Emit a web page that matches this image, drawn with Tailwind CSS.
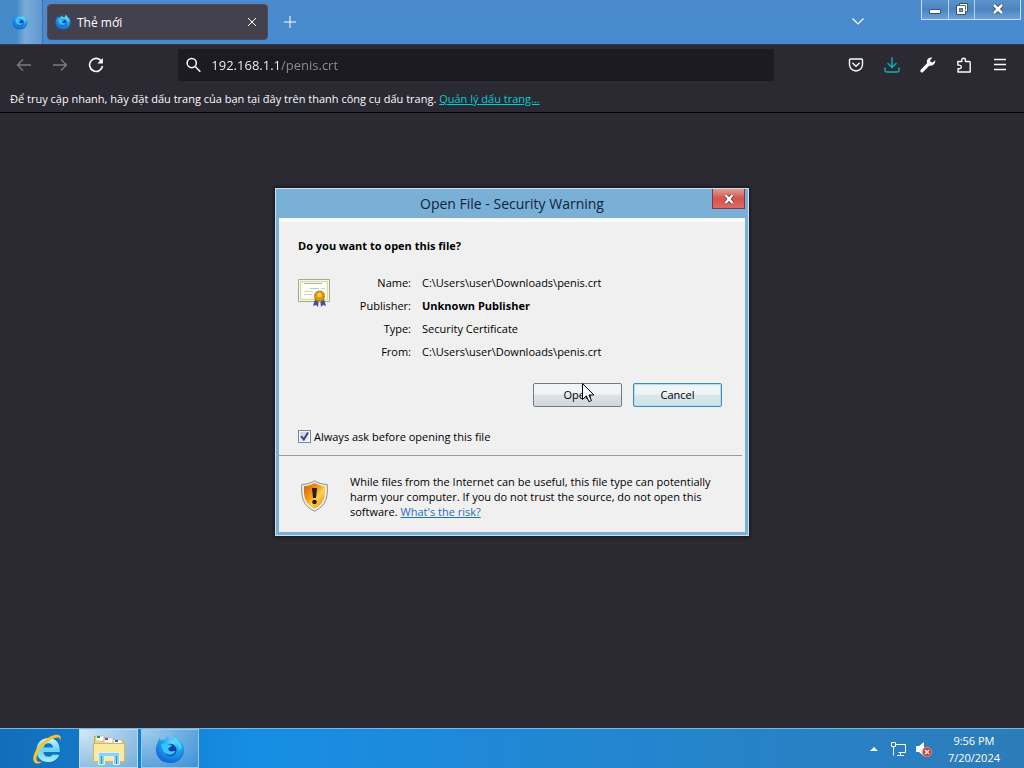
<!DOCTYPE html>
<html lang="vi">
<head>
<meta charset="utf-8">
<meta name="viewport" content="width=device-width, initial-scale=1">
<title>Thẻ mới</title>
<script src="https://cdn.jsdelivr.net/npm/@tailwindcss/browser@4"></script>
</head>
<body class="flex min-h-screen flex-col bg-[#2b2a33] font-['Open_Sans','Noto_Sans',sans-serif] text-[11px] leading-[15px] text-black">

<svg class="absolute size-0" aria-hidden="true">
  <defs>
    <radialGradient id="fxBody" cx="60%" cy="25%" r="80%"><stop offset="0" stop-color="#5fe0ff"/><stop offset=".45" stop-color="#1ea5f5"/><stop offset="1" stop-color="#1060cf"/></radialGradient>
    <symbol id="firefox" viewBox="0 0 32 32">
      <path fill="url(#fxBody)" d="M3 9c.4-2 1.400-3.500 2.400-4.500.1 1.200.4 2 .9 2.700 1.200-.9 2.600-1.300 4-1.300C11.800 4 13 3 14.800 2.400c-.4 1.600.2 2.800 1.700 3.800 1 .5 2.100.9 3 1.500-.3-2.700.5-5.200 2.400-7.200.6 2.500 2.300 4 4.300 6 3 2.900 4.800 6 4.800 10.500C31 25.300 24.500 31 16 31S1 25 1 16.500C1 13.700 1.800 11 3 9z"/>
      <circle cx="16.500" cy="17" r="6.500" fill="#123fa6"/>
      <path fill="#39c6fb" d="M7 11c2-1.200 4-1.200 5.700 0 2 .3 4.300.1 5.300.8-.2 1.700-2.200 2.500-3.600 3.200-.5 2 .6 3.500 2.600 3.600 2 .1 3.200-1 4.800-.2-1.300 2.900-4 4.200-6.900 3.700C10 21.300 7 17 7 11z"/>
      <path fill="#52d9ff" opacity=".8" d="M20 8c4 2 6 5 5.700 9.500 1-1.300 1.300-2.500 1.300-4 1.500 4 .6 8.500-2.500 11.500C28.500 21 30 12 26 8.500 24 6.800 22.500 5 22 3c-1 1.500-1.700 3-2 5z"/>
    </symbol>
  </defs>
</svg>

<header class="text-white">
  <div class="flex h-11 items-start bg-linear-to-b from-[#4c8acb] to-[#468bd0]">
    <div class="flex h-11 w-[43px] items-center border-r border-[#3975b5] bg-linear-to-r from-[#468bc8] from-40% via-[#7cacd9] via-60% to-[#5f98cf] pl-3">
      <svg class="size-4"><use href="#firefox"/></svg>
    </div>
    <div class="mt-1 ml-1 flex h-9 w-[221px] items-center gap-1.5 rounded-sm border border-[#5b4650] bg-[#42414d] pr-[7px] pl-[7px]">
      <svg class="size-4"><use href="#firefox"/></svg>
      <span class="grow pt-px text-xs">Thẻ mới</span>
      <button aria-label="Đóng thẻ" class="p-1"><svg class="size-2" viewBox="0 0 8 8" fill="none" stroke="#fff"><path d="M0 0l8 8M8 0L0 8"/></svg></button>
    </div>
    <button aria-label="Thẻ mới" class="mt-4 ml-4"><svg class="size-3" viewBox="0 0 12 12" fill="none" stroke="#fff"><path d="M6 0v12M0 6h12"/></svg></button>
    <button aria-label="Liệt kê các thẻ" class="mt-[18px] mr-[57px] ml-auto"><svg class="h-[7px] w-3" viewBox="0 0 12 7" fill="none" stroke="#fff" stroke-width="1.200"><path d="M.5.5L6 6 11.500.5"/></svg></button>
    <div class="mr-[3px] flex h-5 divide-x divide-[#b5d4ee] border border-t-0 border-[#c6def2] bg-linear-to-b from-[#5b93cc] via-[#4b84c0] to-[#6ba2d8]">
      <button aria-label="Thu nhỏ" class="grid w-[27px] place-items-center"><svg class="h-5 w-4" viewBox="0 0 16 20"><path d="M2.500 9.500h11v4h-11z" fill="#fff" stroke="#39516e"/></svg></button>
      <button aria-label="Khôi phục" class="grid w-[26px] place-items-center"><svg class="h-5 w-4" viewBox="0 0 16 20"><path fill="#fff" stroke="#39516e" d="M5.500 3.500h8v8h-2v3h-9v-9h3z"/><path d="M5 8h4v4H5z" fill="#4b6e98"/><path d="M6.500 9.500h1v1h-1z" fill="#fff"/><path d="M6 5.500h5.500v5" fill="none" stroke="#4b6e98"/></svg></button>
      <button aria-label="Đóng" class="grid w-[45px] place-items-center"><svg class="h-5 w-4" viewBox="0 0 16 20" fill="none"><path d="M4 5l8 8M12 5l-8 8" stroke="#39516e" stroke-width="4.500"/><path d="M4 5l8 8M12 5l-8 8" stroke="#fff" stroke-width="2.500"/></svg></button>
    </div>
  </div>

  <div class="flex h-[41px] items-center border-t border-[#3a3943] pr-4 pl-4">
    <div class="flex w-[162px] items-center gap-5">
      <button aria-label="Quay lại"><svg class="size-4" viewBox="0 0 16 16" fill="none" stroke="#7c7b83" stroke-width="1.300"><path d="M15 8H1.500M7 2.500L1.500 8 7 13.500"/></svg></button>
      <button aria-label="Tiến"><svg class="size-4" viewBox="0 0 16 16" fill="none" stroke="#7c7b83" stroke-width="1.300"><path d="M1 8h13.500M9 2.500L14.500 8 9 13.500"/></svg></button>
      <button aria-label="Tải lại"><svg class="size-4" viewBox="0 0 16 16" fill="none" stroke="#fbfbfe" stroke-width="1.600"><path d="M13.500 4.300A6.500 6.500 0 1 0 14.500 9"/><path d="M14.900 1v5.500H9.400z" fill="#fbfbfe" stroke="none"/></svg></button>
    </div>
    <label class="mr-[74px] flex h-8 grow items-center gap-2.5 bg-[#1c1b22] px-2">
      <svg class="size-4" viewBox="0 0 16 16" fill="none" stroke="#fbfbfe" stroke-width="1.600"><circle cx="6" cy="6" r="4.800"/><path d="M9.600 9.600L15 15"/></svg>
      <input aria-label="Địa chỉ" type="text" value="192.168.1.1/penis.crt" class="w-full bg-linear-to-r from-[#fbfbfe] from-[69px] to-[#8f8f9d] to-[69px] bg-clip-text text-[13px] text-transparent outline-none">
    </label>
    <div class="flex items-center gap-5">
      <button aria-label="Pocket"><svg class="size-4" viewBox="0 0 16 16" fill="none" stroke="#fbfbfe" stroke-width="1.400" stroke-linecap="round"><path d="M2.500 2h11a1 1 0 0 1 1 1v4.500a6.500 6.500 0 0 1-13 0V3a1 1 0 0 1 1-1z"/><path d="M4.800 6.300L8 9.300l3.200-3"/></svg></button>
      <button aria-label="Tải xuống"><svg class="size-4" viewBox="0 0 16 16" fill="none" stroke="#0fb1bb" stroke-width="1.400" stroke-linecap="round"><path d="M8 .8v9.400M4 6.500l4 4 4-4M1 11v2.200A1.800 1.800 0 0 0 2.800 15h10.400a1.800 1.800 0 0 0 1.800-1.800V11"/></svg></button>
      <button aria-label="Công cụ"><svg class="size-4" viewBox="0 0 16 16" fill="#fbfbfe"><path d="M15.200 3.300l-2.700 2.300-2-.6-.3-2L12.500.6C10.300-.1 8 .9 7.200 3c-.4 1-.4 2 0 3L.8 12.700a1.600 1.600 0 0 0 2.300 2.300l6.400-6.600c3 1.100 6.200-1.500 5.700-5.100z"/></svg></button>
      <button aria-label="Tiện ích"><svg class="size-4" viewBox="0 0 16 16" fill="none" stroke="#fbfbfe" stroke-width="1.400" stroke-linejoin="round"><path d="M2 15v-3.300h1.500a1.800 1.800 0 0 0 0-3.600H1.800V4.500h4V3a1.800 1.800 0 0 1 3.600 0v1.500h3.800a1 1 0 0 1 1 1V15z"/></svg></button>
      <button aria-label="Menu"><svg class="size-4" viewBox="0 0 16 16" fill="none" stroke="#fbfbfe" stroke-width="1.300"><path d="M2 2.500h12M2 7.500h12M2 12.500h12"/></svg></button>
    </div>
  </div>

  <p class="h-7 border-b border-black px-2.5 pt-1.5 text-[#fbfbfe]">Để truy cập nhanh, hãy đặt dấu trang của bạn tại đây trên thanh công cụ dấu trang. <a href="#" class="text-[#00ced8] underline">Quản lý dấu trang…</a></p>
</header>

<main class="flex grow items-start justify-center pt-[75px]">
  <section role="dialog" aria-labelledby="dlg-title" class="w-[474px] border border-[#c3e3f5] bg-[#7ab0d5] px-[3px] pb-[3px] shadow-[0_0_3px_1px_#16151b]">
    <div class="relative h-[29px]">
      <h1 id="dlg-title" class="text-center text-sm leading-[29px] text-[#10233c]">Open File - Security Warning</h1>
      <button aria-label="Close" class="absolute top-0 right-0 grid h-5 w-[33px] place-items-center border border-t-0 border-[#7c3a46] bg-linear-to-b from-[#e39a94] via-[#d2554f] via-50% to-[#dc6a62]"><svg class="h-3 w-4" viewBox="0 0 16 12" fill="none"><path d="M4.500 2l7 8M11.500 2l-7 8" stroke="#6e3038" stroke-width="4"/><path d="M4.500 2l7 8M11.500 2l-7 8" stroke="#fff" stroke-width="2.500"/></svg></button>
    </div>
    <div class="border-t-4 border-[#fafafa] bg-[#f0f0f0]">
      <div class="pt-4 pr-[23px] pb-[11px] pl-[19px]">
        <h2 class="font-bold">Do you want to open this file?</h2>
        <div class="mt-[22px] flex">
          <svg class="mt-1 h-7 w-8" viewBox="0 0 32 28">
            <path fill="#fffef4" stroke="#a6a78b" d="M.5.500h31v22H.5z"/><path fill="none" stroke="#d9dcae" stroke-width="1.500" d="M2.500 2.500h27v18h-27z"/>
            <path stroke="#a9b4c2" fill="none" d="M6 4.500h18"/><path stroke="#9cd2e3" fill="none" d="M12 9.500h9"/><path stroke="#ccd3d5" fill="none" d="M6 12.500h9M6 15.500h8M23 9.500h4"/>
            <path fill="#3d5795" d="M17 20h4l-1 8-2-2-3 1zM22 20h4l2 7-3-1-2 2z"/>
            <circle cx="21.500" cy="17" r="5.500" fill="#e69811"/><circle cx="21.500" cy="17" r="4.500" fill="none" stroke="#b5690d" stroke-dasharray="2 1.500"/><circle cx="21.500" cy="16" r="2.200" fill="#ffd65a"/>
          </svg>
          <dl class="ml-5 grid grid-cols-[61px_1fr] gap-x-[11px] gap-y-2 [&>dt]:text-right">
            <dt>Name:</dt><dd>C:\Users\user\Downloads\penis.crt</dd>
            <dt>Publisher:</dt><dd class="font-bold">Unknown Publisher</dd>
            <dt>Type:</dt><dd>Security Certificate</dd>
            <dt>From:</dt><dd>C:\Users\user\Downloads\penis.crt</dd>
          </dl>
        </div>
        <div class="relative mt-6 flex justify-end gap-[11px]">
          <button class="h-6 w-[89px] rounded-xs border border-[#707b89] bg-linear-to-b from-[#f3f4f5] from-45% via-[#dfe2e6] via-50% to-[#d3d7dd] pb-0.5">Open</button>
          <button class="h-6 w-[89px] rounded-xs border border-[#3c8cb8] bg-linear-to-b from-[#eff4f6] from-45% via-[#dbe8ec] via-50% to-[#cce3ea] pb-0.5 shadow-[inset_0_0_0_1px_#b0dff0]">Cancel</button>
          <svg class="absolute top-0 right-[128px] h-5 w-3" viewBox="0 0 12 20"><path d="M.5.500v16l3.800-3.600 2.600 5.800 2.600-1.200-2.600-5.500h5z" fill="#fff" stroke="#000"/></svg>
        </div>
        <label class="mt-[22px] flex items-center gap-[3px]">
          <input type="checkbox" checked class="peer size-[13px] appearance-none border border-[#7b8796] bg-[#e4e9f0] bg-[linear-gradient(135deg,#c5cedb,#f5f7fa)] shadow-[inset_0_0_0_1px_#f5f7f9]">
          <svg class="pointer-events-none -ml-4 hidden size-[13px] peer-checked:block" viewBox="0 0 13 13" fill="none" stroke="#39477f" stroke-width="2"><path d="M3.200 6l2.600 3.500L10 2.500"/></svg>
          <span>Always ask before opening this file</span>
        </label>
      </div>
      <div class="mr-[3px] border-t border-[#9a9a9a]"></div>
      <div class="flex gap-[21px] pt-[18px] pr-4 pb-[13px] pl-[21px]">
        <svg class="mt-1.5 h-8 w-[29px] shrink-0" viewBox="0 0 29 32">
          <defs><linearGradient id="shield" x1="0" y1="0" x2="1" y2="1"><stop stop-color="#c95b08"/><stop offset=".45" stop-color="#f8a11b"/><stop offset=".6" stop-color="#ffd253"/><stop offset="1" stop-color="#d87810"/></linearGradient></defs>
          <path fill="#f0efe5" stroke="#8f8e83" d="M14.500.8C11 3 6 4.500 1.800 4.500 1 17 2.500 25.500 14.500 31.200 26.500 25.500 28 17 27.200 4.500 23 4.500 18 3 14.500.8z"/>
          <path fill="url(#shield)" d="M14.500 3C11 5 7.500 6 4 6.300 3.600 16.500 4.500 23.500 14.500 28.800 24.500 23.500 25.400 16.500 25 6.300 21.500 6 18 5 14.500 3z"/>
          <path fill="#2e1b09" d="M12 8h5l-1 10h-3z"/><circle cx="14.500" cy="22" r="2.300" fill="#2e1b09"/>
        </svg>
        <p>While files from the Internet can be useful, this file type can potentially harm your computer. If you do not trust the source, do not open this software. <a href="#" class="inline-block text-[#1e6cc7] underline">What's the risk?</a></p>
      </div>
    </div>
  </section>
</main>

<footer class="flex h-10 border-t border-[#78b9e4] bg-linear-to-r from-[#136db9] via-[#168ee4] via-25% to-[#2c7cb9] text-white">
  <button aria-label="Internet Explorer" class="grid w-[79px] place-items-center pl-3.5">
    <svg class="h-8 w-8" viewBox="0 0 32 32" fill="none">
      <defs><linearGradient id="ie" x2="0" y2="1"><stop stop-color="#d3f7ff"/><stop offset=".5" stop-color="#65d2f8"/><stop offset="1" stop-color="#a9edff"/></linearGradient></defs>
      <path fill="url(#ie)" d="M17.500 5C10.500 5 5.500 10 5.500 17.200S10.300 29 17.300 29c5.200 0 9.300-2.700 10.900-7.300h-6.700c-.8 1.400-2.200 2.100-4 2.100-3 0-5-1.900-5.100-4.900h16.300C29.300 10.500 25 5 17.500 5zm-5 9.500c.4-2.700 2.300-4.300 4.900-4.300s4.400 1.600 4.600 4.300z"/>
      <path fill="#f7c52e" d="M4.800 30.300C-.7 27.500 3.300 16.700 11.500 9 19 2 27.700-.2 29.300 3.300c.6 1.400.4 2.900-.3 4.700.1-2-.4-3.200-1.700-3.500-3-.7-9 2.200-14.300 7.600C6 19 3.700 26.500 7 28.600c1.200.7 2.800.5 4.600-.2-2.500 1.700-4.900 2.700-6.800 1.900z"/>
    </svg>
  </button>
  <button aria-label="File Explorer" class="mr-[3px] grid w-[59px] place-items-center border border-[#b8dcf4] bg-[radial-gradient(ellipse_at_top_left,#d5e8f7,#75aedc)]">
    <svg class="h-8 w-9" viewBox="0 0 36 32">
      <path fill="#f2db7c" stroke="#c8a84a" d="M3.500 3.500h9l2 2h8l2 2h8v20h-29z"/>
      <path fill="#fff" stroke="#a7b2a6" stroke-width=".6" d="M5 3h8v5H5zM13 5h9v5h-9zM22 7h9v4h-9z"/><path fill="#34953f" d="M6 3h3v2H6z"/><path fill="#c83f35" d="M14 5h3v2h-3z"/><path fill="#2972c5" d="M24 7h3v2h-3z"/>
      <path fill="#faeaa0" stroke="#d3b75d" d="M2.500 10.500h31v18h-31z"/>
      <path fill="#8fd0ea" stroke="#d8f3fb" d="M7.500 19.500h21v12h-6v-8h-9v8h-6z"/><path stroke="#398eb8" fill="none" d="M10.500 23v8M25.500 23v8"/>
    </svg>
  </button>
  <button aria-label="Firefox" class="grid w-[58px] place-items-center border border-[#9acbef] bg-[radial-gradient(ellipse_at_top_left,#a5cdeb,#3c91d8)]"><svg class="h-[30px] w-[30px]"><use href="#firefox"/></svg></button>
  <div class="ml-auto flex items-center gap-2.5 pr-6">
    <button aria-label="Show hidden icons"><svg class="h-1 w-2" viewBox="0 0 8 4"><path fill="#fff" d="M4 0l4 4H0z"/></svg></button>
    <svg class="ml-0.5 size-4" viewBox="0 0 16 16" fill="none" stroke="#fff"><path d="M5.500 3.500h10v8h-7M10.500 11.500v3M7 14.500h7M1.500 1.500h4v4h-4zM3.500 5.500v9"/></svg>
    <svg class="size-4" viewBox="0 0 16 16"><path fill="#fff" d="M0 5h3l5-4v14l-5-4H0z"/><circle cx="11" cy="11" r="4.800" fill="#cf3f35" stroke="#efb4ad" stroke-width=".6"/><path d="M9 9l4 4M13 9l-4 4" stroke="#fff" stroke-width="1.400"/></svg>
    <div class="ml-1.5 text-center leading-[17px]"><p>9:56 PM</p><p>7/20/2024</p></div>
  </div>
</footer>
</body>
</html>
